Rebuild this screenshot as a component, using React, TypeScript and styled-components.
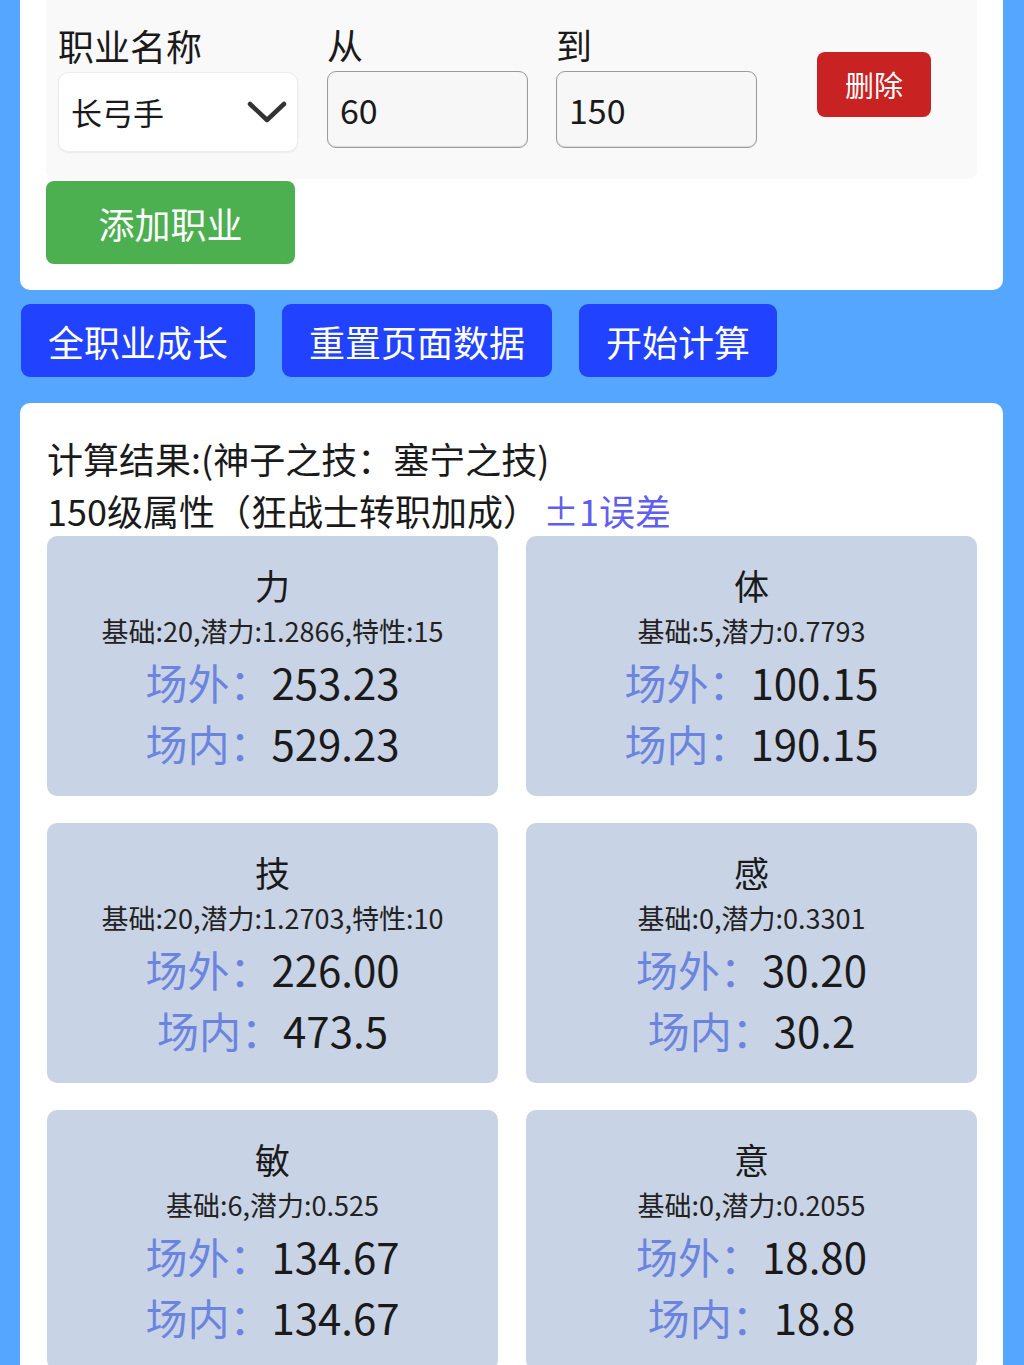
import React from "react";
import styled, { createGlobalStyle } from "styled-components";

const GlobalStyle = createGlobalStyle`
  html, body {
    margin: 0;
    padding: 0;
    background: #55a6ff;
    font-family: "Noto Sans CJK SC", "Noto Sans", sans-serif;
    color: #1a1a1a;
  }
`;

const Page = styled.div`
  padding: 0 21px 0 20px;
  display: flex;
  flex-direction: column;
`;

const Card = styled.div`
  background: #ffffff;
  border-radius: 0 0 10px 10px;
  padding: 0 26px 26px;
`;

const JobPanel = styled.div`
  background: #f9f9f9;
  border-radius: 0 0 8px 8px;
  padding: 20px 12px 27px;
  display: flex;
  align-items: center;
`;

const Field = styled.div<{ $w: number; $gap?: number }>`
  width: ${(p) => p.$w}px;
  margin-right: ${(p) => p.$gap ?? 0}px;
  display: flex;
  flex-direction: column;
`;

const Label = styled.div`
  font-size: 36px;
  line-height: 48px;
  height: 51px;
`;

const Select = styled.div`
  height: 80px;
  box-sizing: border-box;
  background: #ffffff;
  border: 1px solid #ececec;
  border-radius: 10px;
  box-shadow: 0 1px 2px rgba(0, 0, 0, 0.06);
  display: flex;
  align-items: center;
  justify-content: space-between;
  padding: 0 10px 0 12px;
  font-size: 31px;
`;

const Input = styled.div`
  height: 77px;
  box-sizing: border-box;
  background: #f7f7f7;
  border: 1.5px solid #9a9a9a;
  border-radius: 9px;
  box-shadow: inset 0 -1px 1px rgba(0, 0, 0, 0.12);
  display: flex;
  align-items: center;
  padding-left: 12px;
  font-size: 34px;
  margin-bottom: 4px;
`;

const DeleteButton = styled.div`
  margin-left: 60px;
  margin-bottom: 4px;
  width: 114px;
  height: 65px;
  background: #c92222;
  border-radius: 8px;
  color: #ffffff;
  font-size: 29px;
  display: flex;
  align-items: center;
  justify-content: center;
`;

const AddButton = styled.div`
  margin-top: 2px;
  width: 249px;
  height: 83px;
  background: #4caf50;
  border-radius: 8px;
  color: #ffffff;
  font-size: 36px;
  display: flex;
  align-items: center;
  justify-content: center;
`;

const ActionRow = styled.div`
  display: flex;
  gap: 27px;
  margin: 14px 0 26px 1px;
`;

const ActionButton = styled.div`
  height: 73px;
  padding: 0 27px;
  background: #2142ff;
  border-radius: 9px;
  color: #ffffff;
  font-size: 36px;
  display: flex;
  align-items: center;
`;

const ResultCard = styled.div`
  background: #ffffff;
  border-radius: 10px;
  padding: 29px 26px 40px 27px;
`;

const Line = styled.div`
  font-size: 36px;
  line-height: 52px;
  white-space: nowrap;
`;

const Note = styled.span`
  color: #5f5ef0;
  margin-left: 4px;
`;

const Grid = styled.div`
  display: grid;
  grid-template-columns: 1fr 1fr;
  column-gap: 28px;
  row-gap: 27px;
`;

const StatBox = styled.div`
  background: #c8d3e5;
  border-radius: 10px;
  padding: 23px 0 23px;
  display: flex;
  flex-direction: column;
  align-items: center;
`;

const StatName = styled.div`
  font-size: 35px;
  line-height: 52px;
`;

const StatInfo = styled.div`
  font-size: 27px;
  line-height: 40px;
  color: #222;
`;

const StatValue = styled.div`
  font-size: 42px;
  line-height: 61px;
  white-space: nowrap;
`;

const ValueLabel = styled.span`
  color: #6b84e0;
`;

const Chevron = () => (
  <svg width="40" height="24" viewBox="0 0 40 24">
    <polyline
      points="3,4 20,20 37,4"
      fill="none"
      stroke="#333"
      strokeWidth="4.5"
      strokeLinecap="round"
      strokeLinejoin="round"
    />
  </svg>
);

const stats = [
  { name: "力", info: "基础:20,潜力:1.2866,特性:15", out: "253.23", inn: "529.23" },
  { name: "体", info: "基础:5,潜力:0.7793", out: "100.15", inn: "190.15" },
  { name: "技", info: "基础:20,潜力:1.2703,特性:10", out: "226.00", inn: "473.5" },
  { name: "感", info: "基础:0,潜力:0.3301", out: "30.20", inn: "30.2" },
  { name: "敏", info: "基础:6,潜力:0.525", out: "134.67", inn: "134.67" },
  { name: "意", info: "基础:0,潜力:0.2055", out: "18.80", inn: "18.8" },
];

export default function App() {
  return (
    <>
      <GlobalStyle />
      <Page>
        <Card>
          <JobPanel>
            <Field $w={240} $gap={29}>
              <Label>职业名称</Label>
              <Select>
                <span>长弓手</span>
                <Chevron />
              </Select>
            </Field>
            <Field $w={201} $gap={28}>
              <Label>从</Label>
              <Input>60</Input>
            </Field>
            <Field $w={201}>
              <Label>到</Label>
              <Input>150</Input>
            </Field>
            <DeleteButton>删除</DeleteButton>
          </JobPanel>
          <AddButton>添加职业</AddButton>
        </Card>

        <ActionRow>
          <ActionButton>全职业成长</ActionButton>
          <ActionButton>重置页面数据</ActionButton>
          <ActionButton>开始计算</ActionButton>
        </ActionRow>

        <ResultCard>
          <Line>计算结果:(神子之技：塞宁之技)</Line>
          <Line>
            150级属性（狂战士转职加成）<Note>±1误差</Note>
          </Line>
          <Grid>
            {stats.map((s) => (
              <StatBox key={s.name}>
                <StatName>{s.name}</StatName>
                <StatInfo>{s.info}</StatInfo>
                <StatValue>
                  <ValueLabel>场外：</ValueLabel>
                  {s.out}
                </StatValue>
                <StatValue>
                  <ValueLabel>场内：</ValueLabel>
                  {s.inn}
                </StatValue>
              </StatBox>
            ))}
          </Grid>
        </ResultCard>
      </Page>
    </>
  );
}
